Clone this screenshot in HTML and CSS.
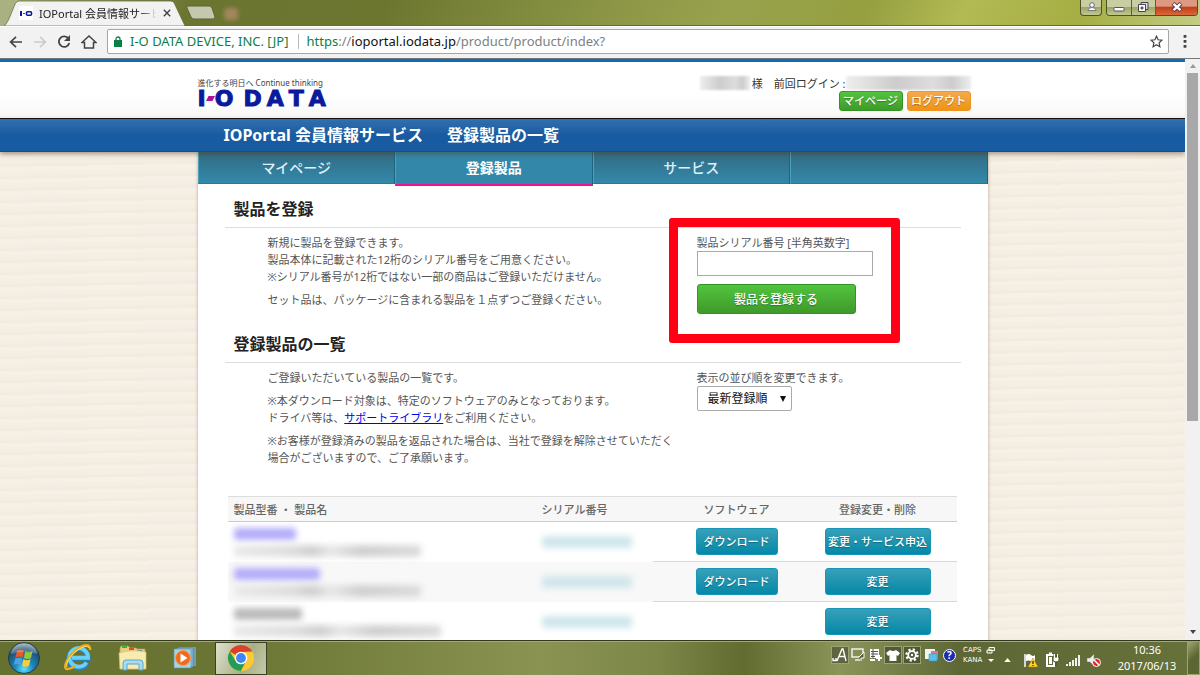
FILE: index.html
```html
<!DOCTYPE html>
<html lang="ja">
<head>
<meta charset="utf-8">
<title>IOPortal 会員情報サービス</title>
<link rel="stylesheet" href="styles.css">
</head>
<body>
<header class="titlebar">
  <div class="tab-wrap">
    <svg class="tab-shape" viewBox="0 0 190 25" preserveAspectRatio="none" aria-hidden="true"><path d="M0 0H18L5 25H0z" fill="#a9b183"/><path d="M4 25C9 23 14 4 17 2Q18 1 20 1H174Q177 1 178 3L189 25z" fill="#f2f2f2" stroke="#5b642b" stroke-width=".7"/></svg>
    <div class="tab">
      <svg class="favicon" viewBox="0 0 14 14" aria-hidden="true"><path fill="#fff" d="M0 0h14v14H0z"/><path fill="#0a1a9c" d="M1 5h2v5H1z"/><path fill="#c01090" d="M4 7h2v1H4z"/><rect x="7.5" y="5.7" width="5" height="3.6" rx="1" fill="none" stroke="#0a1a9c" stroke-width="1.6"/></svg>
      <span class="tab-title">IOPortal 会員情報サービス</span>
      <button class="plain" aria-label="タブを閉じる"><svg width="8" height="8" viewBox="0 0 8 8"><path d="M.8.8l6.4 6.4M7.2.8L.8 7.2" stroke="#444" stroke-width="1.4"/></svg></button>
    </div>
  </div>
  <button class="newtab" aria-label="新しいタブ"><svg width="30" height="15" viewBox="0 0 30 15"><path d="M2 1h21q2 0 3 2l3 9q0 2-2 2H8q-2 0-3-2L1 3q-1-2 1-2z" fill="#c3c8ae" stroke="#5c6630"/></svg></button>
  <span class="smudge"></span>
  <div class="winbtns">
    <button class="wb user" aria-label="ユーザー"><svg width="22" height="16" viewBox="0 0 22 16"><circle cx="11" cy="5" r="2.3" fill="#fff" stroke="#667"/><path d="M7 10.500q0-3 4-3t4 3z" fill="#fff" stroke="#667" stroke-width=".8"/></svg></button>
    <div class="wgroup">
      <button class="wb" aria-label="最小化"><svg width="24" height="15" viewBox="0 0 24 15"><rect x="7" y="7.500" width="10" height="3.500" rx=".8" fill="#fff" stroke="#556"/></svg></button>
      <button class="wb" aria-label="元に戻す"><svg width="23" height="15" viewBox="0 0 23 15"><path d="M9 2.500h7v7h-7z" fill="#ddd" stroke="#445"/><path d="M6.500 4.500h7v7h-7z" fill="#fff" stroke="#445"/><path d="M9 7h2v2H9z" fill="#778" stroke="#445" stroke-width=".8"/></svg></button>
      <button class="wb close" aria-label="閉じる"><svg width="41" height="15" viewBox="0 0 41 15"><path d="M17 3.500l8 7m0-7l-8 7" stroke="#534" stroke-width="4.200"/><path d="M17.500 3.800l7 6.400m0-6.400l-7 6.400" stroke="#fff" stroke-width="2.400"/></svg></button>
    </div>
  </div>
</header>
<nav class="toolbar" aria-label="ブラウザ">
  <button class="plain" aria-label="戻る"><svg width="14" height="12" viewBox="0 0 14 12"><path d="M13 6H2M7 .8L1.600 6 7 11.200" fill="none" stroke="#444" stroke-width="1.700"/></svg></button>
  <button class="plain" aria-label="進む"><svg width="14" height="12" viewBox="0 0 14 12"><path d="M1 6h11M7 .8L12.400 6 7 11.200" fill="none" stroke="#ccc" stroke-width="1.700"/></svg></button>
  <button class="plain" aria-label="再読み込み"><svg width="14" height="14" viewBox="0 0 14 14"><path d="M11.500 3.500A5.300 5.300 0 1 0 12.300 8" fill="none" stroke="#444" stroke-width="1.800"/><path d="M13 0v6H7z" fill="#444"/></svg></button>
  <button class="plain" aria-label="ホーム"><svg width="16" height="14" viewBox="0 0 16 14"><path d="M1 7.500L8 1l7 6.500H12.500V13H3.500V7.500z" fill="none" stroke="#444" stroke-width="1.500"/></svg></button>
  <div class="omnibox">
    <svg width="8" height="11" viewBox="0 0 8 11" aria-hidden="true"><path d="M0 4h8v7H0z" fill="#0b8043"/><path d="M2 5V3a2 2 0 0 1 4 0v2" fill="none" stroke="#0b8043" stroke-width="1.300"/></svg>
    <span class="org">I-O DATA DEVICE, INC. [JP]</span>
    <span class="url"><span class="secure">https</span>://<span class="host">ioportal.iodata.jp</span>/product/product/index?</span>
    <button class="plain star" aria-label="ブックマーク"><svg width="13" height="13" viewBox="0 0 13 13"><path d="M6.500 1.200l1.600 3.600 3.900.4-2.900 2.600.8 3.900-3.400-2-3.400 2 .8-3.900L1 5.200l3.900-.4z" fill="none" stroke="#444" stroke-width="1.200"/></svg></button>
  </div>
  <button class="plain menu" aria-label="メニュー"><svg width="4" height="13" viewBox="0 0 4 13"><path d="M.6 0h2.800v2.800H.6zM.6 5h2.800v2.800H.6zM.6 10h2.800v2.800H.6z" fill="#444"/></svg></button>
</nav>
<div class="viewport">
  <div class="page">
    <div class="site-head">
      <div class="wrap head-row">
        <div class="brand">
          <div class="tagline">進化する明日へ Continue thinking</div>
          <div class="logo"><span>I</span><svg width="9" height="6" viewBox="0 0 9 6" aria-hidden="true"><path d="M2.500 0H9L6.500 5H0z" fill="#b0109c"/></svg><span>O</span><span class="logo-data"><span>D</span><span>A</span><span>T</span><span>A</span></span></div>
        </div>
        <div class="account">
          <div class="login"><span class="mask name"></span>様　前回ログイン :<span class="mask date"></span></div>
          <div class="acct-btns"><button class="btn green small">マイページ</button><button class="btn orange small">ログアウト</button></div>
        </div>
      </div>
    </div>
    <div class="banner"><h1 class="wrap"><span>IOPortal 会員情報サービス</span><span>登録製品の一覧</span></h1></div>
    <div class="wrap sheet">
      <nav class="tabs"><a href="#">マイページ</a><a href="#" class="on">登録製品</a><a href="#">サービス</a><span></span></nav>
      <main class="main">
        <h2>製品を登録</h2>
        <div class="cols first">
          <div class="desc">
            <p>新規に製品を登録できます。<br>製品本体に記載された12桁のシリアル番号をご用意ください。<br>※シリアル番号が12桁ではない一部の商品はご登録いただけません。</p>
            <p>セット品は、パッケージに含まれる製品を１点ずつご登録ください。</p>
          </div>
          <form class="side">
            <label for="serial">製品シリアル番号 [半角英数字]</label>
            <input id="serial" type="text">
            <button type="button" class="btn green register">製品を登録する</button>
            <span class="callout"></span>
          </form>
        </div>
        <h2>登録製品の一覧</h2>
        <div class="cols second">
          <div class="desc">
            <p>ご登録いただいている製品の一覧です。</p>
            <p>※本ダウンロード対象は、特定のソフトウェアのみとなっております。<br>ドライバ等は、<a href="#">サポートライブラリ</a>をご利用ください。</p>
            <p>※お客様が登録済みの製品を返品された場合は、当社で登録を解除させていただく<br>場合がございますので、ご了承願います。</p>
          </div>
          <div class="side">
            <label for="order">表示の並び順を変更できます。</label>
            <div class="select"><select id="order"><option>最新登録順</option></select><span class="arrow"></span></div>
          </div>
        </div>
        <table class="list">
          <thead><tr><th class="c1">製品型番 ・ 製品名</th><th class="c2">シリアル番号</th><th class="c3">ソフトウェア</th><th class="c4">登録変更・削除</th></tr></thead>
          <tbody>
            <tr><td><span class="hid blue w60"></span><span class="hid gray w185"></span></td><td class="ser"><span class="hid teal"></span></td><td class="c"><button class="btn teal-btn dl">ダウンロード</button></td><td class="c"><button class="btn teal-btn ch">変更・サービス申込</button></td></tr>
            <tr class="alt"><td><span class="hid blue w85"></span><span class="hid gray w185"></span></td><td class="ser"><span class="hid teal"></span></td><td class="c"><button class="btn teal-btn dl">ダウンロード</button></td><td class="c"><button class="btn teal-btn ch">変更</button></td></tr>
            <tr><td><span class="hid dark w65"></span><span class="hid gray w205"></span></td><td class="ser"><span class="hid teal"></span></td><td class="c"></td><td class="c"><button class="btn teal-btn ch">変更</button></td></tr>
          </tbody>
        </table>
      </main>
    </div>
  </div>
  <div class="scrollbar" aria-hidden="true"><span class="up"></span><span class="thumb"></span><span class="down"></span></div>
</div>
<footer class="taskbar">
  <button class="plain start" aria-label="スタート"><svg width="34" height="34" viewBox="0 0 34 34"><defs><radialGradient id="orb" cx=".5" cy=".85" r=".85"><stop offset="0" stop-color="#5fe0ff"/><stop offset=".35" stop-color="#1c86bb"/><stop offset=".75" stop-color="#214f70"/><stop offset="1" stop-color="#9fb4bf"/></radialGradient></defs><circle cx="17" cy="17" r="15.500" fill="url(#orb)" stroke="#263a40"/><path d="M10 10q4-2 7 0l-1.500 6.500q-3.500-2-7 0z" fill="#ee5a2a"/><path d="M18 10.300q4 2 7.500 0L24 17q-3.500 2-7 0z" fill="#92c83e"/><path d="M8.200 17.700q3.500-2 7 0L13.700 24q-3.500-2-7 0z" fill="#4aa3e0"/><path d="M16.300 18.200q3.700 2 7.200 0L22 24.700q-3.500 2-7 0z" fill="#fccf3a"/><path d="M4 13Q6 3 17 2.500 28 3 30 13 17 8 4 13z" fill="#fff" opacity=".25"/></svg></button>
  <button class="plain task" aria-label="Internet Explorer"><svg width="30" height="28" viewBox="0 0 30 28"><path d="M24 18.500A9.500 9.500 0 1 1 25 14H9" fill="none" stroke="#2386c8" stroke-width="5.500"/><path d="M23.500 18.500A9.300 9.300 0 1 1 25 13.800H9" fill="none" stroke="#69d0f8" stroke-width="4"/><path d="M5 25C-1 26 3 15 12 7 20 0 28-1 27 6M5 25q3 0 7-3" fill="none" stroke="#e9ad1e" stroke-width="2.400"/><path d="M4 23C2 19 9 9 18 4q6-3 8 0" fill="none" stroke="#ffe276" stroke-width="1"/></svg></button>
  <button class="plain task" aria-label="エクスプローラー"><svg width="30" height="28" viewBox="0 0 30 28"><path d="M2 4l1-2h7l2 2h6l1 1h8v20H2z" fill="#e7ce7c" stroke="#b79b4a" stroke-width=".7"/><path d="M4 2h5v2H4z" fill="#38ad48"/><path d="M11 4h5v2h-5z" fill="#db4a3c"/><path d="M19 6h5v2h-5z" fill="#3e9ad8"/><path d="M1 9q13-4 27-1v17H2z" fill="#f9ebae" stroke="#d8bd67" stroke-width=".7"/><path d="M5 26v-7q0-3 3-3h14q3 0 3 3v7h-4v-6H9v6z" fill="#a5dcf0" stroke="#5aa8cc"/></svg></button>
  <button class="plain task" aria-label="メディアプレーヤー"><svg width="26" height="24" viewBox="0 0 26 24"><path d="M7 1h17v19H7z" fill="#6c9eb6"/><path d="M5 2h16v19H5z" fill="#8fc1d8" stroke="#4c829c" stroke-width=".7"/><path d="M2 3h17v19H2z" fill="#a6d3e5" stroke="#5d94ae" stroke-width=".7"/><circle cx="11" cy="12" r="7.500" fill="#ee6c20" stroke="#fa9f55"/><path d="M8.500 7.500l7 4.500-7 4.500z" fill="#fff"/></svg></button>
  <button class="plain task active" aria-label="Chrome"><svg width="28" height="28" viewBox="0 0 28 28"><circle cx="14" cy="14" r="13" fill="#fbc934"/><path d="M14 14L2.740 7.500A13 13 0 0 1 25.260 7.500L14 8z" fill="#d9412f"/><path d="M2.740 7.500A13 13 0 0 0 14 27l5.200-10L14 14 8 16z" fill="#249c55"/><path d="M14 8h11.500A13 13 0 0 1 14 27l5.200-10z" fill="#fbc934"/><circle cx="14" cy="14" r="6.300" fill="#fff"/><circle cx="14" cy="14" r="4.900" fill="#4285f4"/></svg></button>
  <div class="tray">
    <div class="ime">
      <span class="cell"><svg width="16" height="16" viewBox="0 0 16 16"><path d="M5 14l5-12h1l3 12M7 9.500h6M1 11v2.500h3V11" fill="none" stroke="#fff" stroke-width="1.400"/></svg></span>
      <svg width="16" height="16" viewBox="0 0 16 16"><path d="M2 2h11v8H2zM5 13h5" fill="none" stroke="#eee" stroke-width="1.500"/><path d="M9 10l5-5v6h-3v3" fill="#555c38" stroke="#fff"/></svg>
      <svg width="16" height="16" viewBox="0 0 16 16"><path d="M3 2h9v9H3z" fill="#fff"/><path d="M4 4.500h7M4 7h7M4 9.500h4M6 2v9" stroke="#555"/><path d="M3 13h5M9 11h6m-3-3v6" stroke="#fff" stroke-width="2"/></svg>
      <span class="cell"><svg width="16" height="16" viewBox="0 0 16 16"><path d="M5 3q3 2 6 0l4 3-2 3-1.500-1V14h-7V8L3 9 1 6z" fill="#fff"/></svg></span>
      <span class="cell"><svg width="16" height="16" viewBox="0 0 16 16"><circle cx="8" cy="8" r="5.500" fill="none" stroke="#fff" stroke-width="2.400" stroke-dasharray="2.200 2.120"/><circle cx="8" cy="8" r="3.800" fill="none" stroke="#fff" stroke-width="1.800"/><circle cx="8" cy="8" r="1.200" fill="#fff"/></svg></span>
      <svg class="pad" width="16" height="16" viewBox="0 0 16 16"><path d="M2 2h10v10H2z" fill="#f3f3f3"/><path d="M8 4h7v8H8z" fill="#e57391"/><path d="M6 7h8v7H6z" fill="#5bc0e6" stroke="#3c96bd" stroke-width=".6"/></svg>
      <span class="help">?</span>
      <span class="kana">CAPS<br>KANA</span>
      <svg width="10" height="18" viewBox="0 0 10 18"><path d="M3 1.500h5.500v3H3zM1 4h5v3H1z" fill="#717b3b" stroke="#fff"/><path d="M2 13h6l-3 3z" fill="#fff"/></svg>
    </div>
    <svg class="upcaret" width="7" height="4" viewBox="0 0 8 5"><path d="M4 0l4 5H0z" fill="#fff"/></svg>
    <div class="status">
      <svg width="16" height="16" viewBox="0 0 16 16"><path d="M2 2v13" stroke="#fff" stroke-width="1.500"/><path d="M3 3q3-2 5 0t4 0v6q-2 1-4 0T3 9z" fill="#fff"/><path d="M10 6l5 9H5z" fill="#ffd22c" stroke="#a77a0a" stroke-width=".5"/><path d="M10 9v3m0 1v1" stroke="#222" stroke-width="1.200"/></svg>
      <svg width="16" height="16" viewBox="0 0 16 16"><path d="M3 3h7v11H3zM5 1.500h3" fill="none" stroke="#fff" stroke-width="2"/><path d="M5 5h3v7H5z" fill="#fff"/><path d="M9 5h6v3q0 2-3 2t-3-2zM10 2v3m3-3v3m-1 5v4" fill="#fff" stroke="#465024"/><path d="M10.500 2v4m3-4v4" stroke="#fff"/></svg>
      <svg width="16" height="16" viewBox="0 0 16 16"><path d="M2 14v-2m3 2v-4m3 4V8m3 6V6m3 8V3" stroke="#fff" stroke-width="1.800"/></svg>
      <svg width="16" height="16" viewBox="0 0 16 16"><path d="M1 6h3l4-4v12l-4-4H1z" fill="#eee" stroke="#777" stroke-width=".5"/><circle cx="10.500" cy="10.500" r="4" fill="#d92b23" stroke="#fff"/><path d="M8 8l5 5" stroke="#fff" stroke-width="1.400"/></svg>
    </div>
    <div class="clock">10:36<br>2017/06/13</div>
    <button class="desk" aria-label="デスクトップの表示"></button>
  </div>
</footer>
</body>
</html>
```
FILE: styles.css
```css
* { box-sizing: border-box; }
body {
  margin: 0;
  height: 100vh;
  display: flex;
  flex-direction: column;
  overflow: hidden;
  font-family: "Noto Sans", "Noto Sans CJK JP", sans-serif;
  font-size: 11px;
  line-height: 17px;
  color: #555;
}
button, input, select { font: inherit; margin: 0; padding: 0; }
svg { display: block; flex: none; }
h1, h2, p { margin: 0; }
.plain { border: 0; background: none; display: flex; align-items: center; justify-content: center; }

/* window title bar */
.titlebar {
  display: flex;
  flex: none;
  height: 26px;
  background: linear-gradient(115deg, #a9b183 0, #6b7530 16%, #6d762f 32%, #838d40 45%, #98a24d 60%, #96a040 72%, #b2ba54 80%, #a5ae42 90%, #c4cc86 100%);
  border-bottom: 1px solid #646f20;
}
.tab-wrap { display: grid; grid-template-columns: 100%; width: 186px; flex: none; }
.tab-wrap > * { grid-area: 1 / 1; min-width: 0; }
.tab-shape { width: 100%; height: 26px; }
.tab { display: flex; align-items: center; gap: 6px; padding: 0 15px 0 19px; }
.favicon { width: 14px; height: 14px; }
.tab-title {
  flex: 1;
  min-width: 0;
  overflow: hidden;
  white-space: nowrap;
  color: #222;
  -webkit-mask-image: linear-gradient(to right, #000 85%, transparent);
  mask-image: linear-gradient(to right, #000 85%, transparent);
}
.newtab { border: 0; background: none; align-self: center; height: 15px; width: 30px; }
.smudge { width: 14px; height: 12px; margin: 8px; background: #b98f72; border-radius: 4px; filter: blur(2px); opacity: .7; }
.winbtns { margin-left: auto; display: flex; gap: 4px; padding-right: 2px; align-items: flex-start; }
.wb { border: 0; border-right: 1px solid #5a6134; background: linear-gradient(#c9cda2 45%, #9fa66a 50%, #c2c88e); }
.wb.user { border: 1px solid #4c5228; border-top: 0; border-radius: 0 0 4px 4px; height: 16px; width: 22px; overflow: hidden; }
.wgroup { display: flex; height: 16px; border: 1px solid #4c5228; border-top: 0; border-radius: 0 0 4px 4px; overflow: hidden; }
.wb.close { border: 0; background: linear-gradient(#dd9a80 40%, #c2401c 50%, #d8683a); }

/* browser toolbar */
.toolbar {
  display: flex;
  flex: none;
  align-items: center;
  gap: 10px;
  height: 33px;
  padding: 0 13px 2px 9px;
  background: #f2f2f2;
  border-top: 1px solid #fff;
  border-bottom: 1px solid #777;
}
.omnibox {
  flex: 1;
  display: flex;
  align-items: center;
  gap: 8px;
  height: 25px;
  margin-right: 4px;
  padding: 0 5px 0 6px;
  background: #fff;
  border: 1px solid #a6a6a6;
  border-radius: 2px;
  font-size: 13px;
  white-space: nowrap;
}
.org { color: #0b8043; padding-right: 9px; border-right: 1px solid #bbb; line-height: 15px; }
.url { color: #808080; }
.secure { color: #0b8043; }
.host { color: #111; }
.star { margin-left: auto; }

/* page */
.viewport { flex: 1; min-height: 0; display: flex; }
.page {
  flex: 1;
  min-width: 0;
  overflow: hidden;
  background: #f5eee3 repeating-linear-gradient(179deg, rgba(255, 255, 255, .15) 0 3px, transparent 5px 8px, rgba(215, 195, 170, .07) 10px 12px);
}
.wrap { width: 100%; max-width: 790px; margin: 0 auto; }
.site-head {
  height: 60px;
  background: linear-gradient(#fff 60%, #f7f7f7);
  border-top: 3px solid #0d6cb8;
  border-bottom: 1px solid #111;
}
.head-row { display: flex; justify-content: space-between; padding: 14px 17px 0 0; }
.tagline { font-size: 8px; line-height: 13px; color: #444; }
.logo {
  display: flex;
  align-items: center;
  font: bold 22px/20px "DejaVu Sans", sans-serif;
  color: #0a1a9c;
  -webkit-text-stroke: 1px #0a1a9c;
}
.logo-data { display: flex; gap: 5px; margin-left: 10px; }
.account { display: flex; flex-direction: column; align-items: flex-end; color: #333; }
.login { display: flex; line-height: 15px; }
.mask { height: 14px; background: linear-gradient(90deg, #eee, #ccc 40%, #ddd 70%, #ccc 85%, #eee); filter: blur(1px); }
.name { width: 50px; margin-right: 2px; }
.date { width: 125px; }
.acct-btns { display: flex; gap: 4px; }
.btn { border: 1px solid; border-radius: 3px; color: #fff; text-shadow: 0 1px 1px rgba(0, 0, 0, .3); white-space: nowrap; }
.green { background: linear-gradient(#52c43e, #3f9a2b); border-color: #329422; }
.orange { background: linear-gradient(#f4a94b, #ee9316); border-color: #ef9420; }
.small { width: 64px; height: 20px; font-weight: 500; line-height: 16px; }
.banner { height: 33px; background: linear-gradient(#336fae, #195ba0 50%); border-bottom: 1px solid #134e91; box-shadow: 0 2px 5px rgba(80, 60, 30, .5); position: relative; }
.banner h1 { display: flex; gap: 24px; padding-left: 26px; font-size: 16px; line-height: 32px; color: #fff; }
.sheet { background: #fff; box-shadow: 0 0 3px rgba(110, 90, 60, .5); min-height: 500px; }
.tabs { display: grid; grid-template: 32px / repeat(4, 1fr); }
.tabs > * {
  background: linear-gradient(#326b82, #3388aa);
  border-right: 1px solid #1c6480;
  border-left: 1px solid #4fa0ba;
  border-bottom: 1px solid #237a9a;
  color: #dfeff5;
  font-size: 14px;
  font-weight: 500;
  line-height: 32px;
  text-align: center;
  text-decoration: none;
}
.tabs .on { background: #3388aa; color: #fff; font-weight: bold; height: 34px; border-bottom: 2px solid #ee1199; }
.main { padding: 0 27px; }
h2 { height: 44px; padding: 13px 9px 0; border-bottom: 1px solid #ddd; font-size: 16px; line-height: 24px; color: #222; }
.main .cols + h2 { height: 44px; }
.cols { display: grid; grid-template-columns: 1fr 264px; padding-top: 6px; }
.first { padding-bottom: 5px; }
.second { padding-bottom: 30px; }
.desc { display: flex; flex-direction: column; gap: 6px; padding-left: 43px; white-space: nowrap; }
.desc a { color: #00e; }
.side { position: relative; display: flex; flex-direction: column; align-items: flex-start; }
.side input { width: 176px; height: 25px; border: 1px solid #aaa; background: #fff; }
.register { width: 159px; height: 30px; margin-top: 8px; font-size: 12px; font-weight: 500; }
.callout { position: absolute; top: -16px; left: -28px; width: 231px; height: 125px; border: 9px solid #ff0014; border-radius: 3px; pointer-events: none; }
.select { display: grid; align-items: center; }
.select > * { grid-area: 1 / 1; }
.select select { appearance: none; width: 95px; height: 25px; padding-left: 10px; border: 1px solid #aaa; border-radius: 2px; background: #fff; color: #111; font-size: 12px; }
.arrow { justify-self: end; margin-right: 6px; border: 3px solid transparent; border-top: 6px solid #111; border-bottom: 0; pointer-events: none; }

.list { width: 100%; border-collapse: separate; border-spacing: 0; table-layout: fixed; border: 0 solid #fff; border-width: 0 4px 0 3px; }
.list th { height: 26px; padding: 0 6px; background: #f7f7f7; border-top: 1px solid #ddd; border-bottom: 1px solid #ccc; font-weight: 500; color: #666; text-align: left; }
.list .c2 { width: 139px; }
.list .c3 { width: 124px; text-align: center; }
.list .c4 { width: 158px; text-align: center; }
.list td { height: 40px; padding: 0 6px; vertical-align: middle; }
.list .c { text-align: center; border-bottom: 1px solid #d8d8d8; }
.list .ser { background: linear-gradient(to right, transparent 117px, #d8d8d8 117px) bottom / 100% 1px no-repeat; }
.alt { background: #f8f8f8; }
.hid { display: block; height: 12px; margin: 0 0 5px; border-radius: 3px; filter: blur(3px); }
.blue { background: #b3acfa; }
.gray { background: linear-gradient(90deg, #eaeaea, #dedede 30%, #d0d0d0 42%, #e8e8e8 52%, #cfcfcf 68%, #dcdcdc); margin-bottom: 0; }
.dark { background: #bbb; }
.teal { background: #d0e6ea; width: 90px; margin: 0; }
.w60 { width: 62px; }
.w65 { width: 68px; }
.w85 { width: 86px; }
.w185 { width: 187px; }
.w205 { width: 207px; }
.teal-btn { height: 27px; background: linear-gradient(#38a0b8, #0588a8); border-color: #1697b8; font-weight: 500; vertical-align: middle; }
.dl { width: 82px; }
.ch { width: 106px; }

.scrollbar { width: 15px; flex: none; display: flex; flex-direction: column; align-items: center; background: #f1f1f1; }
.up { margin: 5px 0; border: 3px solid transparent; border-bottom: 4px solid #999; border-top: 0; }
.thumb { width: 11px; height: 348px; background: #a8a8a8; }
.down { margin: auto 0 6px; border: 3px solid transparent; border-top: 4px solid #444; border-bottom: 0; }

/* taskbar */
.taskbar {
  display: flex;
  flex: none;
  align-items: center;
  height: 35px;
  border-top: 1px solid #33371b;
  background: linear-gradient(90deg, #66712f 0, #6c7634 20%, #8a9352 45%, #7c8647 55%, #626b30 62%, #8b955a 70%, #5d6736 80%, #67713a 100%);
  box-shadow: inset 0 1px #a3aa75;
}
.start { width: 48px; height: 34px; }
.task { width: 54px; height: 33px; }
.task:nth-child(2) { width: 60px; }
.task:nth-child(3) { width: 50px; }
.active { width: 52px; margin-left: 3px; border: 1px solid #fff; outline: 1px solid #3a4020; outline-offset: -1px; background: linear-gradient(115deg, #dfe1cf, #a9af84 60%, #c5c9ab); }
.tray { margin-left: auto; display: flex; align-items: center; height: 100%; color: #fff; }
.ime { display: flex; align-items: center; gap: 1px; height: 24px; margin-bottom: 6px; }
.cell { border: 1px solid #9ba278; background: rgba(40, 45, 30, .45); }
.pad { margin-left: 1px; }
.help { width: 13px; height: 13px; margin: 0 6px 0 3px; border: 1px solid #fff; border-radius: 50%; background: #1b2bb0; font-size: 10px; font-weight: bold; line-height: 11px; text-align: center; }
.kana { font: 7px/10px "DejaVu Sans", sans-serif; width: 22px; }
.upcaret { margin: 3px 12px 0 8px; }
.status { display: flex; gap: 5px; margin-top: 3px; }
.clock { width: 62px; margin: 0 9px 0 14px; text-align: center; line-height: 16px; white-space: nowrap; }
.desk { width: 13px; height: 34px; border: 1px solid #9ba56d; background: linear-gradient(135deg, #9ea674, #5c6633 50%); }
```
